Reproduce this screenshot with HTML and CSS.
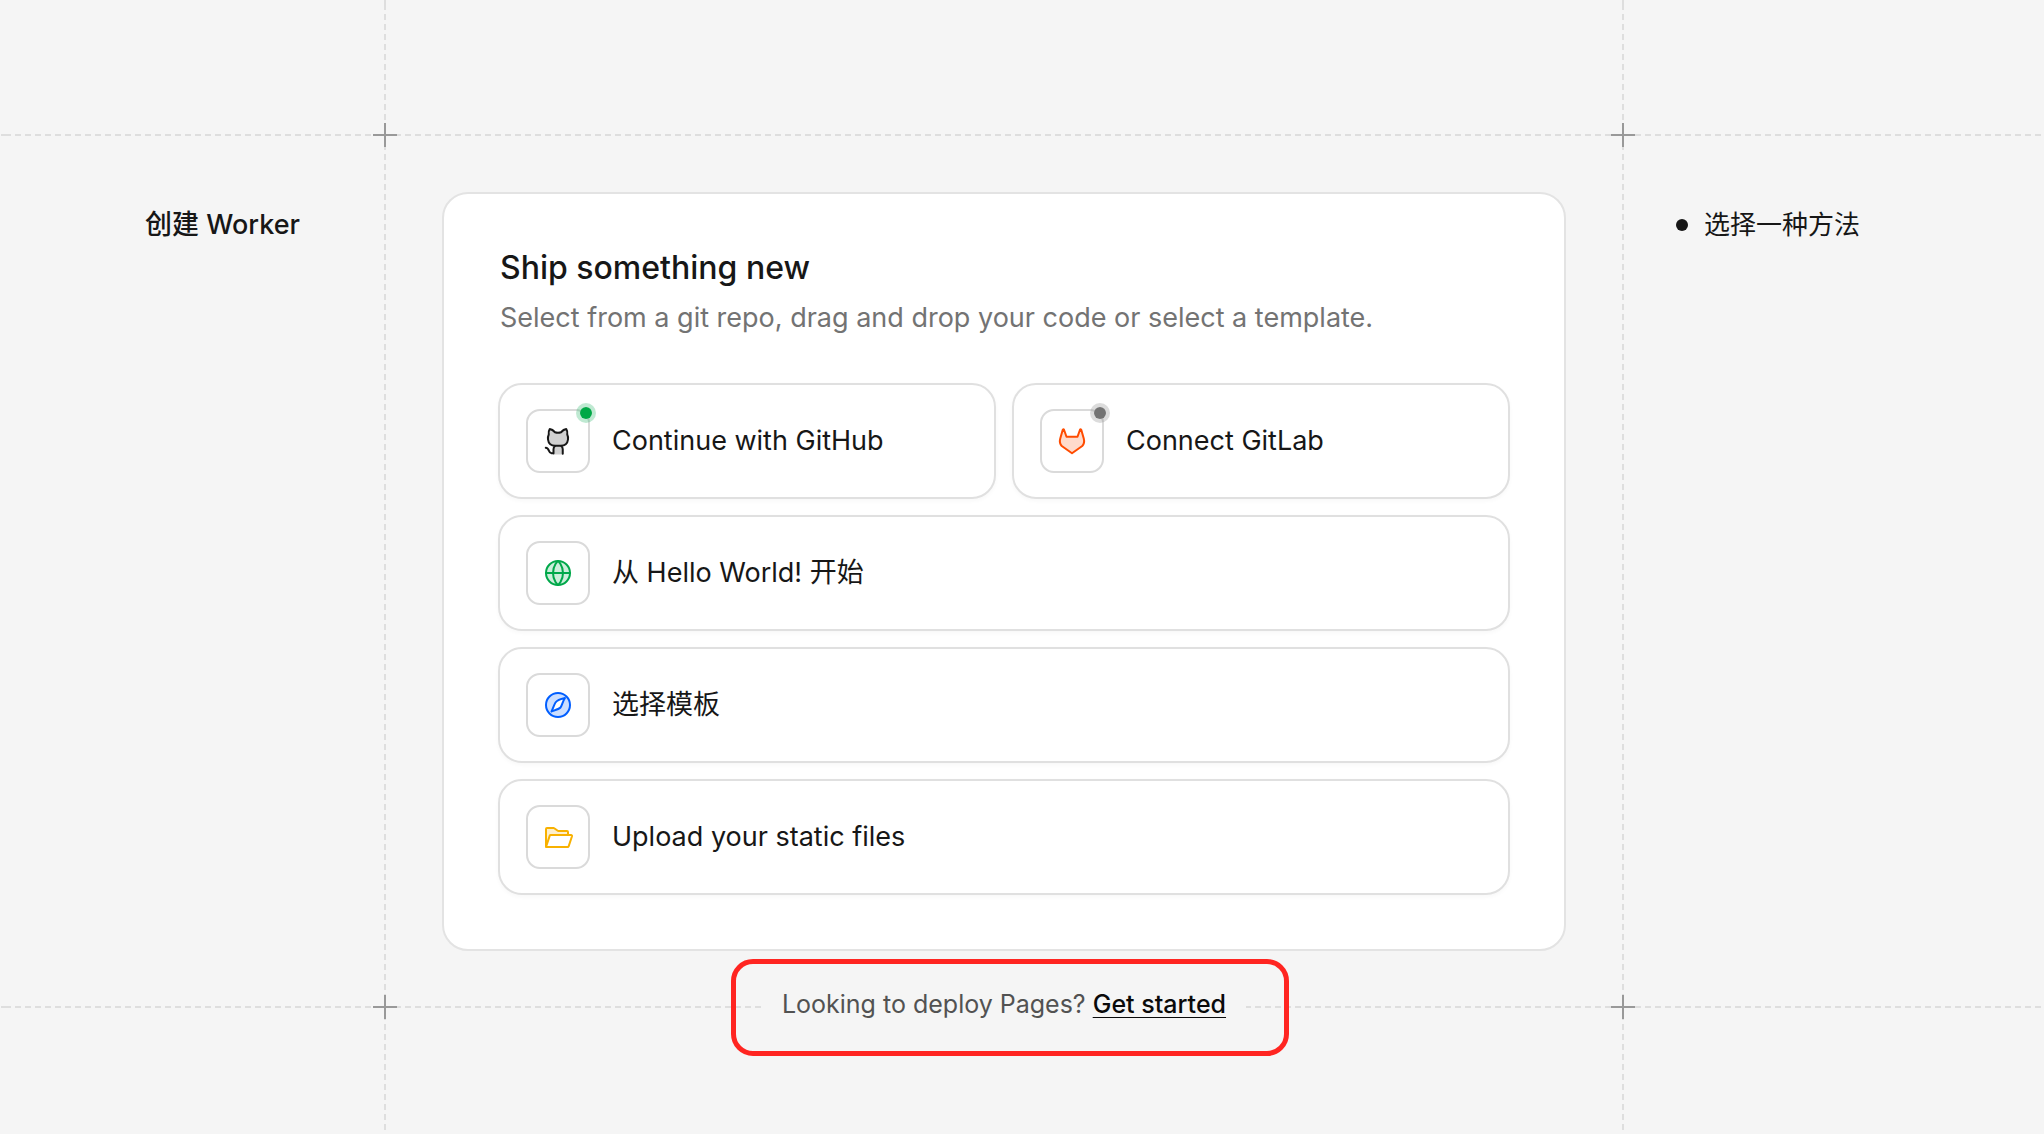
FILE: index.html
```html
<!DOCTYPE html>
<html lang="zh-CN">
<head>
    <meta charset="UTF-8">
    <meta name="viewport" content="width=device-width, initial-scale=1.0">
    <title>创建 Worker</title>
    <link rel="stylesheet" href="styles.css">
</head>
<body>
    <div class="page">
        <!-- dashed guides and crosses -->
        <div class="guide-h guide-top"></div>
        <div class="guide-h guide-bottom"></div>
        <div class="guide-v guide-left"></div>
        <div class="guide-v guide-right"></div>
        <div class="cross guide-top guide-left"></div>
        <div class="cross guide-top guide-right"></div>
        <div class="cross guide-bottom guide-left"></div>
        <div class="cross guide-bottom guide-right"></div>

        <aside class="side-title">
            <h1>创建 Worker</h1>
        </aside>

        <main class="stage">
            <section class="card">
                <h2>Ship something new</h2>
                <p class="intro">Select from a git repo, drag and drop your code or select a template.</p>

                <div class="options">
                    <button type="button" class="option">
                        <span class="icon-box github">
                            <svg viewBox="0 0 256 256">
                                <path class="tint" d="M62 32C78 34 92 44 104 58Q128 66 152 58C164 44 178 34 194 32Q206 50 202 76Q210 92 208 116Q202 162 154 166Q166 178 166 236H94V194Q94 178 102 166Q54 162 48 116Q46 92 54 76Q50 50 62 32Z"/>
                                <path d="M62 32C78 34 92 44 104 58Q128 66 152 58C164 44 178 34 194 32Q206 50 202 76Q210 92 208 116Q202 166 150 166H106Q54 166 48 116Q46 92 54 76Q50 50 62 32Z"/>
                                <path d="M92 228V194Q92 178 104 168M166 230V194Q166 178 154 168M30 182C62 184 48 224 76 226H92"/>
                            </svg>
                            <span class="status"></span>
                        </span>
                        Continue with GitHub
                    </button>
                    <button type="button" class="option">
                        <span class="icon-box gitlab">
                            <svg viewBox="0 0 256 256">
                                <path class="tint" d="M60 36L84 94H172L196 36L224 112Q232 144 212 168L128 226L44 168Q24 144 32 112Z"/>
                                <path d="M64 38Q60 30 54 38L34 108Q24 144 46 168L128 226L210 168Q232 144 222 108L202 38Q196 30 192 38L172 94H84Z"/>
                            </svg>
                            <span class="status"></span>
                        </span>
                        Connect GitLab
                    </button>
                    <button type="button" class="option wide">
                        <span class="icon-box globe">
                            <svg viewBox="0 0 256 256">
                                <circle class="tint" cx="128" cy="128" r="96"/>
                                <circle cx="128" cy="128" r="96"/>
                                <path d="M32 128H224M168 128c0 64-40 96-40 96s-40-32-40-96 40-96 40-96 40 32 40 96Z"/>
                            </svg>
                        </span>
                        从 Hello World! 开始
                    </button>
                    <button type="button" class="option wide">
                        <span class="icon-box compass">
                            <svg viewBox="0 0 256 256">
                                <circle class="tint" cx="128" cy="128" r="96"/>
                                <circle cx="128" cy="128" r="96"/>
                                <path class="needle" d="M184 72C156 78 118 94 108 108C98 122 88 158 76 180C104 170 138 160 148 148C158 134 166 98 184 72Z"/>
                            </svg>
                        </span>
                        选择模板
                    </button>
                    <button type="button" class="option wide">
                        <span class="icon-box folder">
                            <svg viewBox="0 0 256 256">
                                <path class="tint" d="M208 88v24H70a8 8 0 0 0-8 5L32 208V64a8 8 0 0 1 8-8H93a8 8 0 0 1 5 2l28 20a8 8 0 0 0 5 2h69a8 8 0 0 1 8 8Z"/>
                                <path d="M32 208L62 117a8 8 0 0 1 8-5H232a8 8 0 0 1 8 10L213 203a8 8 0 0 1-8 5ZM32 208V64a8 8 0 0 1 8-8H93a8 8 0 0 1 5 2l28 20a8 8 0 0 0 5 2h69a8 8 0 0 1 8 8v24"/>
                            </svg>
                        </span>
                        Upload your static files
                    </button>
                </div>
            </section>
        </main>

        <aside class="steps">
            <ol>
                <li>选择一种方法</li>
            </ol>
        </aside>

        <div class="pages-prompt">
            <p>Looking to deploy Pages? <a href="#">Get started</a></p>
            <div class="highlight"></div>
        </div>
    </div>
</body>
</html>
```
FILE: styles.css
```css
* { box-sizing: border-box; }
body {
    margin: 0;
    background: #f5f5f5;
    color: #171717;
    font-family: Inter, "Noto Sans CJK SC", sans-serif;
    font-size: 27px;
    line-height: 40px;
}
h1, h2, p, ol { margin: 0; padding: 0; font-weight: 400; }

.page {
    display: grid;
    grid-template-columns: 384px 2px 1fr 2px 420px;
    grid-template-rows: 134px 2px auto 2px 1fr;
    min-height: 100vh;
}

/* guides */
.guide-top { grid-row: 2; }
.guide-bottom { grid-row: 4; }
.guide-left { grid-column: 2; }
.guide-right { grid-column: 4; }
.guide-h {
    grid-column: 1 / -1;
    background: repeating-linear-gradient(to right, #dedede 0 6px, transparent 6px 10px) 5px 0;
}
.guide-v {
    grid-row: 1 / -1;
    background: repeating-linear-gradient(to bottom, #dedede 0 6px, transparent 6px 10px) 0 4px;
}
.cross {
    width: 24px;
    height: 24px;
    margin: -11px;
    background:
        linear-gradient(#999, #999) center / 24px 2px no-repeat,
        linear-gradient(#999, #999) center / 2px 24px no-repeat;
}

/* side columns */
.side-title, .steps {
    grid-row: 3;
    padding-top: 69px;
}
.side-title {
    grid-column: 1;
    padding-right: 84px;
    text-align: right;
}
.side-title h1 { font-size: 27px; font-weight: 500; }
.steps {
    grid-column: 5;
    padding-left: 52px;
    font-size: 26px;
    font-weight: 500;
}
.steps ol { list-style: none; }
.steps li {
    display: flex;
    align-items: center;
    gap: 16px;
}
.steps li::before {
    content: "";
    width: 12px;
    height: 12px;
    border-radius: 50%;
    background: #171717;
}

/* card */
.stage {
    grid-column: 3;
    grid-row: 3;
    padding: 56px 56px 55px;
}
.card {
    padding: 54px;
    background: #fff;
    border: 2px solid #e3e3e3;
    border-radius: 26px;
}
.card h2 {
    padding: 0 2px;
    font-size: 32px;
    font-weight: 500;
    line-height: 40px;
}
.intro {
    margin: 10px 0 45px;
    padding: 0 2px;
    color: #737373;
}
.options {
    display: grid;
    grid-template-columns: 1fr 1fr;
    gap: 16px;
}
.option {
    display: flex;
    align-items: center;
    gap: 22px;
    height: 116px;
    padding: 0 26px;
    border: 2px solid #e0e0e0;
    border-radius: 24px;
    background: #fff;
    box-shadow: 0 2px 4px rgba(0, 0, 0, 0.03);
    color: inherit;
    font: inherit;
    text-align: left;
    cursor: pointer;
}
.option.wide { grid-column: 1 / -1; }

.icon-box {
    position: relative;
    display: flex;
    align-items: center;
    justify-content: center;
    width: 64px;
    height: 64px;
    border: 2px solid #dadada;
    border-radius: 14px;
}
.icon-box svg {
    width: 32px;
    height: 32px;
    fill: none;
    stroke: currentColor;
    stroke-width: 16;
    stroke-linecap: round;
    stroke-linejoin: round;
}
.icon-box .tint { fill: currentColor; fill-opacity: 0.2; stroke: none; }
.icon-box .needle { fill: #fff; }
.github { color: #171717; }
.gitlab { color: #ff4b00; }
.globe { color: #00a84a; }
.compass { color: #005eff; }
.folder { color: #f8b100; }

.status {
    position: absolute;
    top: -8px;
    right: -8px;
    width: 20px;
    height: 20px;
    border: 4px solid rgba(115, 115, 115, 0.25);
    border-radius: 50%;
    background: #737373 padding-box;
}
.github .status { border-color: rgba(0, 168, 74, 0.25); background-color: #00a846; }

/* pages prompt */
.pages-prompt {
    grid-column: 3;
    grid-row: 4 / 6;
    position: relative;
    justify-self: center;
    align-self: start;
    margin-top: -22px;
}
.pages-prompt p {
    padding: 0 20px;
    background: #f5f5f5;
    color: #525252;
    font-size: 25px;
}
.pages-prompt a {
    color: #0a0a0a;
    font-weight: 500;
    text-decoration: underline 1px;
    text-underline-offset: 4px;
}
.highlight {
    position: absolute;
    top: -25px;
    right: -43px;
    bottom: -32px;
    left: -31px;
    border: 5px solid #ff2521;
    border-radius: 22px;
    pointer-events: none;
}
```
